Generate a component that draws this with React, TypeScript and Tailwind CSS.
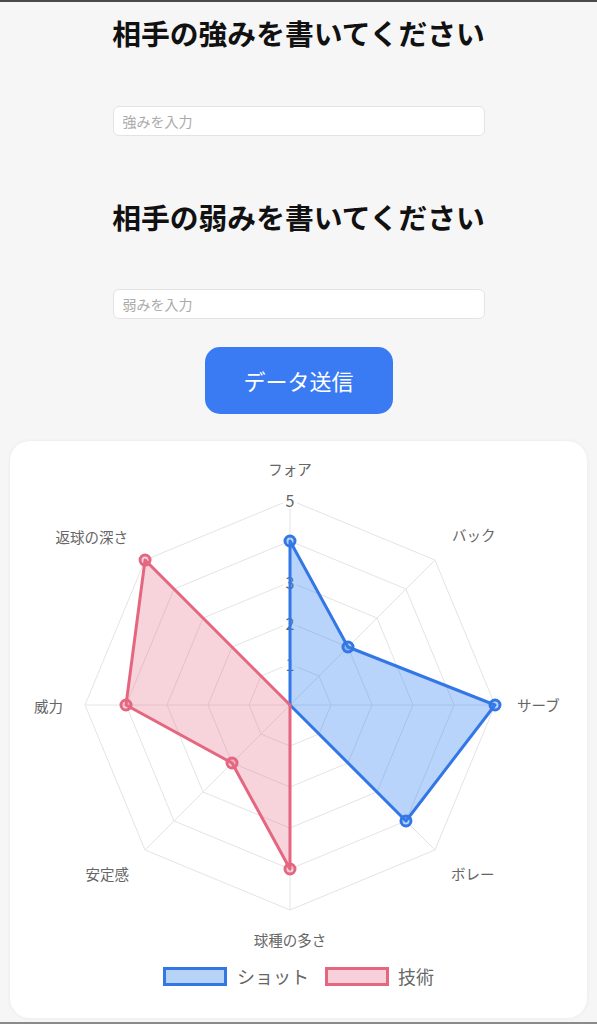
import React from 'react';

const LABELS = [
  { text: 'フォア', x: 280, y: 27, anchor: 'middle' },
  { text: 'バック', x: 442, y: 93, anchor: 'start' },
  { text: 'サーブ', x: 507, y: 263, anchor: 'start' },
  { text: 'ボレー', x: 441, y: 432, anchor: 'start' },
  { text: '球種の多さ', x: 280, y: 498, anchor: 'middle' },
  { text: '安定感', x: 119, y: 432, anchor: 'end' },
  { text: '威力', x: 53, y: 264, anchor: 'end' },
  { text: '返球の深さ', x: 118, y: 95, anchor: 'end' },
];

const CX = 280;
const CY = 264;
const STEP = 41; // px per level, 5 levels

const shot = [4, 2, 5, 4, 0, 0, 0, 0];
const skill = [0, 0, 0, 0, 4, 2, 4, 5];

const pt = (i: number, v: number) => {
  const a = ((-90 + 45 * i) * Math.PI) / 180;
  return [CX + Math.cos(a) * v * STEP, CY + Math.sin(a) * v * STEP];
};

const ring = (v: number) =>
  Array.from({ length: 8 }, (_, i) => pt(i, v).join(',')).join(' ');

const Dataset = ({ values, stroke, fill }: { values: number[]; stroke: string; fill: string }) => (
  <g>
    <polygon points={values.map((v, i) => pt(i, v).join(',')).join(' ')} fill={fill} stroke={stroke} strokeWidth={3} strokeLinejoin="round" />
    {values.map((v, i) =>
      v > 0 ? (
        <circle key={i} cx={pt(i, v)[0]} cy={pt(i, v)[1]} r={5} fill={fill} stroke={stroke} strokeWidth={3} />
      ) : null
    )}
  </g>
);

const Radar = () => (
  <svg width={577} height={515} viewBox="0 0 577 515" className="block">
    {[1, 2, 3, 4, 5].map(l => (
      <polygon key={l} points={ring(l)} fill="none" stroke="#e4e4e4" strokeWidth={1} />
    ))}
    {Array.from({ length: 8 }, (_, i) => {
      const [x, y] = pt(i, 5);
      return <line key={i} x1={CX} y1={CY} x2={x} y2={y} stroke="#e4e4e4" strokeWidth={1} />;
    })}
    {[1, 2, 3, 5].map(l => (
      <g key={l}>
        <rect x={CX - 7} y={CY - l * STEP - 9} width={14} height={18} fill="rgba(255,255,255,0.75)" />
        <text x={CX} y={CY - l * STEP} textAnchor="middle" dominantBaseline="central" fontSize={16} fill="#666">
          {l}
        </text>
      </g>
    ))}
    <Dataset values={shot} stroke="#3377e6" fill="rgba(54,132,240,0.35)" />
    <Dataset values={skill} stroke="#e5667f" fill="rgba(228,110,140,0.3)" />
    {LABELS.map(l => (
      <text key={l.text} x={l.x} y={l.y} textAnchor={l.anchor as any} dominantBaseline="central" fontSize={14.5} fill="#666">
        {l.text}
      </text>
    ))}
  </svg>
);

const App: React.FC = () => {
  return (
    <div className="h-[1024px] overflow-hidden bg-[#f6f6f6] border-t-2 border-t-[#4a4a4a] font-['Noto_Sans_CJK_JP','Noto_Sans',sans-serif] flex flex-col items-center">
      <h1 className="shrink-0 mt-[11px] text-[28.8px] leading-[40px] font-bold text-[#111]">相手の強みを書いてください</h1>
      <input
        placeholder="強みを入力"
        className="shrink-0 mt-[53px] w-[372px] h-[30px] px-[9px] bg-white border border-[#e3e3e3] rounded-md text-[14px] text-[#333] placeholder:text-[#aaa] outline-none"
      />
      <h2 className="shrink-0 mt-[61px] text-[28.8px] leading-[40px] font-bold text-[#111]">相手の弱みを書いてください</h2>
      <input
        placeholder="弱みを入力"
        className="shrink-0 mt-[52px] w-[372px] h-[30px] px-[9px] bg-white border border-[#e3e3e3] rounded-md text-[14px] text-[#333] placeholder:text-[#aaa] outline-none"
      />
      <button className="shrink-0 mt-[28px] w-[188px] h-[67px] rounded-[15px] bg-[#3a7bf4] text-white text-[22px]">
        データ送信
      </button>
      <div className="shrink-0 mt-[27px] w-[577px] bg-white rounded-[20px] shadow-[0_0_4px_rgba(0,0,0,0.06)] pb-[32px]">
        <Radar />
        <div className="mt-[11px] h-[19px] leading-[19px] flex items-center justify-center text-[18px] text-[#666]">
          <span className="w-[64px] h-[19px] border-[3px] border-[#3377e6] bg-[#b8d3f8]" />
          <span className="ml-[10px]">ショット</span>
          <span className="ml-[16px] w-[64px] h-[19px] border-[3px] border-[#e5667f] bg-[#f7d0da]" />
          <span className="ml-[9px]">技術</span>
        </div>
      </div>
      <div className="flex-1" />
      <div className="shrink-0 w-full h-[2px] bg-[#8a8a8a]" />
    </div>
  );
};

export default App;
